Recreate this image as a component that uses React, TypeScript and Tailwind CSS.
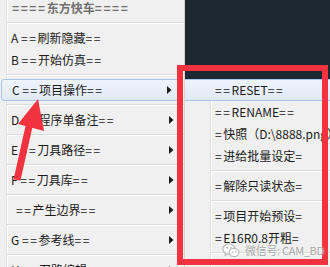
import React from "react";

const font = { fontFamily: '"Noto Sans CJK SC", "Noto Sans", sans-serif' };

// the "=" signs in the original are wider than in our font, so give them some spacing
function Label({ text }: { text: string }) {
  return (
    <span>
      {text.split(/(=+)/).map((part, i) =>
        part.startsWith("=") ? (
          <span key={i} className="tracking-[1.6px]">
            {part}
          </span>
        ) : (
          <span key={i}>{part}</span>
        )
      )}
    </span>
  );
}

function Arrow() {
  return (
    <svg width="5" height="8" viewBox="0 0 5 8" className="shrink-0">
      <path d="M0 0 L4.5 4 L0 8 Z" fill="#1a1a1a" />
    </svg>
  );
}

function Item({ label, sub, active, indent }: { label: string; sub?: boolean; active?: boolean; indent?: boolean }) {
  return (
    <div
      className={
        "h-[22px] flex items-center justify-between pr-[10px] text-[12px] text-[#1a1a1a] whitespace-nowrap " +
        (active
          ? "mx-px rounded-[3px] border border-[#a9c7ee] bg-[linear-gradient(#eef4fc,#e1e9f6)] pl-[10px] pr-[9px]"
          : indent
          ? "pl-[16px]"
          : "pl-[11px]")
      }
    >
      <Label text={label} />
      {sub && <Arrow />}
    </div>
  );
}

function Sep({ inset }: { inset: string }) {
  return (
    <div className={"h-[8px] flex flex-col justify-center " + inset}>
      <div className="h-px bg-[#dcdcdc]" />
      <div className="h-px bg-white" />
    </div>
  );
}

function SubItem({ label, active }: { label: string; active?: boolean }) {
  return (
    <div
      className={
        "h-[22px] flex items-center pl-[30px] text-[12px] text-[#1a1a1a] whitespace-nowrap " +
        (active ? "border-y border-[#a9c7ee] bg-[linear-gradient(#eef4fc,#e1e9f6)]" : "")
      }
    >
      <Label text={label} />
    </div>
  );
}

function WeChat() {
  return (
    <svg width="18" height="15" viewBox="0 0 18 15">
      <ellipse cx="7" cy="6" rx="6.2" ry="5" fill="#ffffff" fillOpacity="0.7" stroke="#b5b5b5" strokeWidth="1.1" />
      <path d="M3.5 10 L2.8 12.5 L6 10.8" fill="#ffffff" stroke="#b5b5b5" strokeWidth="1" />
      <ellipse cx="12" cy="9.5" rx="5" ry="4" fill="#ffffff" fillOpacity="0.85" stroke="#b5b5b5" strokeWidth="1.1" />
      <circle cx="5" cy="4.8" r="0.9" fill="#b5b5b5" />
      <circle cx="9" cy="4.8" r="0.9" fill="#b5b5b5" />
      <circle cx="10.5" cy="9" r="0.7" fill="#b5b5b5" />
      <circle cx="13.5" cy="9" r="0.7" fill="#b5b5b5" />
    </svg>
  );
}

export default function App() {
  return (
    <div className="relative w-[330px] h-[267px] overflow-hidden flex bg-[#1d2832]" style={font}>
      {/* main popup menu */}
      <div className="w-[185px] shrink-0 border-r border-[#d4d4d4] bg-[linear-gradient(to_right,#f0f0f0_6px,#e0e0e0_6px,#e0e0e0_7px,#ffffff_7px,#ffffff_8px,#f0f0f0_8px)]">
        <div className="-mt-[3px]">
          <div className="h-[22px] flex items-center pl-[12px] text-[12px] font-bold text-[#707070] whitespace-nowrap">
            <Label text="====东方快车====" />
          </div>
          <Sep inset="pl-[7px]" />
          <Item label="A ==刷新隐藏==" />
          <Item label="B ==开始仿真==" />
          <Sep inset="pl-[7px]" />
          <Item label="C ==项目操作==" sub active />
          <Sep inset="pl-[7px]" />
          <Item label="D ==程序单备注==" sub />
          <Sep inset="pl-[7px]" />
          <Item label="E ==刀具路径==" sub />
          <Sep inset="pl-[7px]" />
          <Item label="F ==刀具库==" sub />
          <Sep inset="pl-[7px]" />
          <Item label="==产生边界==" sub indent />
          <Sep inset="pl-[7px]" />
          <Item label="G ==参考线==" sub />
          <Sep inset="pl-[7px]" />
          <Item label="H ==刀路编辑==" sub />
        </div>
      </div>

      {/* right side: dark workspace and submenu */}
      <div className="flex-1 flex flex-col min-w-0">
        <div className="h-[79px] shrink-0 bg-[#1d2832]" />
        <div className="flex-1 overflow-hidden bg-[linear-gradient(to_right,#f0f0f0_25px,#e0e0e0_25px,#e0e0e0_26px,#ffffff_26px,#ffffff_27px,#f0f0f0_27px)]">
          <SubItem label="==RESET==" active />
          <SubItem label="==RENAME==" />
          <SubItem label="=快照（D:\8888.png）" />
          <SubItem label="=进给批量设定=" />
          <Sep inset="pl-[26px]" />
          <SubItem label="=解除只读状态=" />
          <Sep inset="pl-[26px]" />
          <SubItem label="=项目开始预设=" />
          <SubItem label="=E16R0.8开粗=" />
          <Sep inset="pl-[26px]" />
          <SubItem label="" />
        </div>
      </div>

      {/* red annotation box */}
      <div className="absolute left-[177px] top-[65px] w-[151px] h-[200px] border-[6px] border-[#f2333f]" />

      {/* red annotation arrow */}
      <svg className="absolute left-0 top-0 pointer-events-none" width="330" height="267">
        <line x1="17" y1="180" x2="30" y2="122" stroke="#f2333f" strokeWidth="7" />
        <polygon points="38,99 18,124 44,131" fill="#f2333f" />
      </svg>

      {/* watermark */}
      <div className="absolute left-[222px] top-[242px] flex items-center gap-[5px] text-[11px] text-[#a6a6a6] [text-shadow:0_0_2px_#ffffff]">
        <WeChat />
        <span className="tracking-[-0.3px]">微信号: CAM_BD</span>
      </div>
    </div>
  );
}
